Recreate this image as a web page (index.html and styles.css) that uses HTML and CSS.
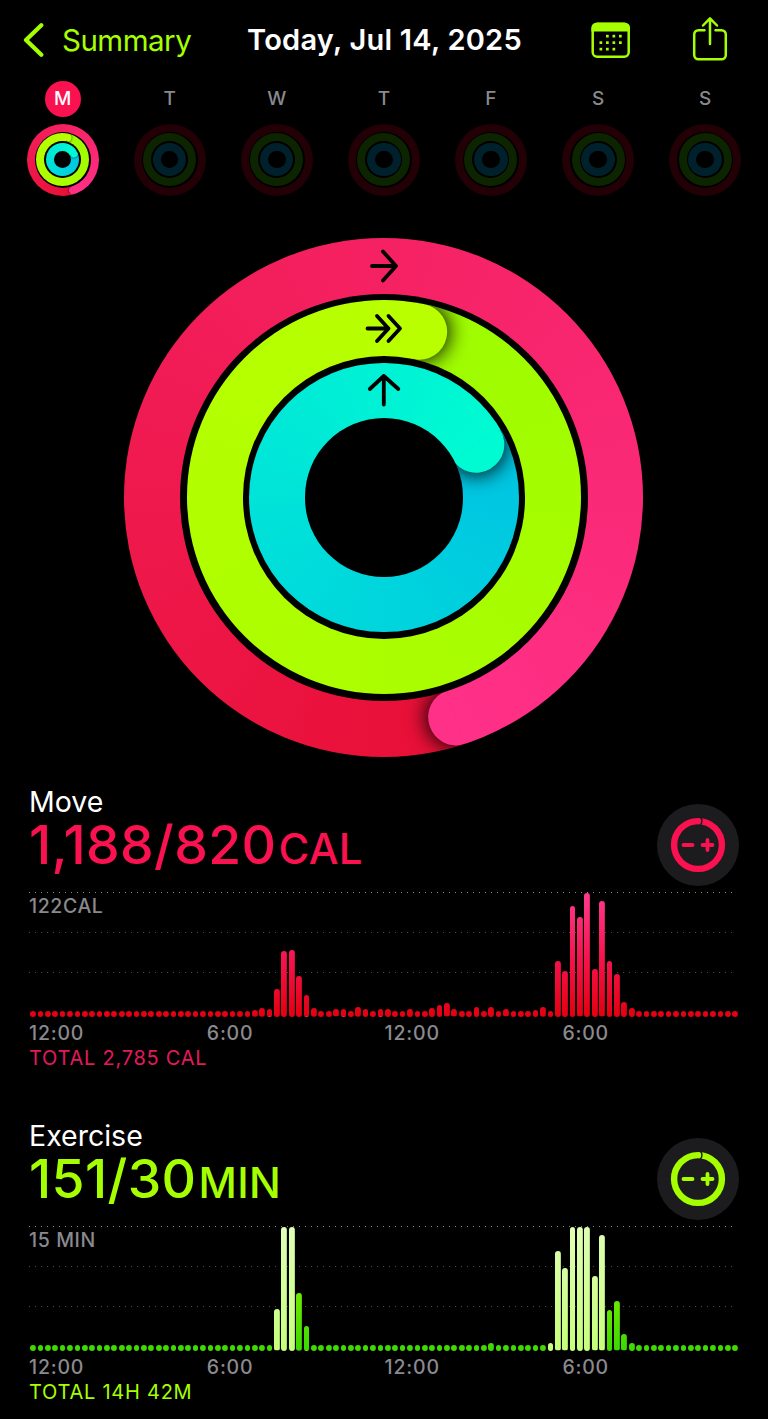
FILE: index.html
```
<!DOCTYPE html>
<html lang="en">
<head>
  <meta charset="UTF-8" />
  <meta name="viewport" content="width=device-width, initial-scale=1.0"/>
  <title>Activity - Summary</title>
  <link rel="stylesheet" href="styles.css">
</head>
<body>
  <header class="topbar">
    <a class="back">
      <svg width="22" height="36" viewBox="0 0 22 36"><path d="M19.300 3.200 4 18 19.300 32.800"/></svg>
      <span>Summary</span>
    </a>
    <h1>Today, Jul 14, 2025</h1>
    <div class="actions">
      <svg class="calendar" width="40" height="36" viewBox="0 0 40 36">
        <rect x="1.700" y="1.900" width="36" height="32.800" rx="4.500"/>
        <path class="solid" d="M.4 9.500V6a5.500 5.500 0 0 1 5.500-5.500H33.500A5.500 5.500 0 0 1 39 6v3.500z"/>
        <g class="solid">
          <rect x="15" y="12.800" width="2.700" height="2.700"/><rect x="21.500" y="12.800" width="2.700" height="2.700"/><rect x="28" y="12.800" width="2.700" height="2.700"/>
          <rect x="8.500" y="19.300" width="2.700" height="2.700"/><rect x="15" y="19.300" width="2.700" height="2.700"/><rect x="21.500" y="19.300" width="2.700" height="2.700"/><rect x="28" y="19.300" width="2.700" height="2.700"/>
          <rect x="8.500" y="25.800" width="2.700" height="2.700"/><rect x="15" y="25.800" width="2.700" height="2.700"/><rect x="21.500" y="25.800" width="2.700" height="2.700"/>
        </g>
      </svg>
      <svg class="share" width="36" height="46" viewBox="0 0 36 46">
        <path d="M12.500 14.200H6.500A4.300 4.300 0 0 0 2.200 18.500V39a4.300 4.300 0 0 0 4.300 4.300h23a4.300 4.300 0 0 0 4.300-4.300V18.500a4.300 4.300 0 0 0-4.300-4.300H23.500M18 28V2.500M11 9.500 18 2.300 25 9.500"/>
      </svg>
    </div>
  </header>

  <div class="week" id="week"></div>

  <div class="rings big">
    <div class="ring move"><div class="tip"></div>
      <div class="gap">
        <div class="ring exercise"><div class="tip"></div>
          <div class="gap">
            <div class="ring stand"><div class="tip"></div>
              <div class="gap hole"></div>
            </div>
          </div>
        </div>
      </div>
    </div>
    <svg class="arrows" viewBox="0 0 519 519">
      <path d="M248 28H272M259 13.500 272 28 259 42.500"/>
      <path d="M243.500 90.500H264.500M253 78 264.500 90.500 253 103M264.500 78 276 90.500 264.500 103"/>
      <path d="M259.800 166.500V138M245.800 151 259.800 138 274.300 151"/>
    </svg>
  </div>

  <section class="metric pink">
    <div class="metric-head">
      <div>
        <h2>Move</h2>
        <p class="value">1,188/820<small>CAL</small></p>
      </div>
      <button class="adjust" aria-label="Change move goal">
        <svg width="56" height="56" viewBox="0 0 56 56">
          <circle cx="28" cy="28" r="23.900"/>
          <path class="notch" d="M30.500 .2Q33.500 4 30.500 8"/>
          <path class="sign" d="M13.500 28H22.500M32.500 28H42.500M37.500 23V33"/>
        </svg>
      </button>
    </div>
    <div class="chart">
      <span class="scale">122CAL</span>
      <div class="bars" id="move-bars"></div>
    </div>
    <div class="hours"><span>12:00</span><span>6:00</span><span>12:00</span><span>6:00</span></div>
    <p class="total">TOTAL 2,785 CAL</p>
  </section>

  <section class="metric green">
    <div class="metric-head">
      <div>
        <h2>Exercise</h2>
        <p class="value">151/30<small>MIN</small></p>
      </div>
      <button class="adjust" aria-label="Change exercise goal">
        <svg width="56" height="56" viewBox="0 0 56 56">
          <circle cx="28" cy="28" r="23.900"/>
          <path class="notch" d="M30.500 .2Q33.500 4 30.500 8"/>
          <path class="sign" d="M13.500 28H22.500M32.500 28H42.500M37.500 23V33"/>
        </svg>
      </button>
    </div>
    <div class="chart">
      <span class="scale">15 MIN</span>
      <div class="bars" id="exercise-bars"></div>
    </div>
    <div class="hours"><span>12:00</span><span>6:00</span><span>12:00</span><span>6:00</span></div>
    <p class="total">TOTAL 14H 42M</p>
  </section>

  <script>
    const days = ["M", "T", "W", "T", "F", "S", "S"];
    const week = document.getElementById("week");

    days.forEach((day, i) => {
      week.innerHTML += `
        <div class="day ${i === 0 ? "today" : "empty"}">
          <span class="letter">${day}</span>
          <div class="rings mini">
            <div class="ring move"><div class="tip"></div><div class="gap">
              <div class="ring exercise"><div class="tip"></div><div class="gap">
                <div class="ring stand"><div class="tip"></div><div class="gap hole"></div></div>
              </div></div>
            </div></div>
          </div>
        </div>`;
    });

    // one bar per 15 minutes, slots that are not listed stay at the minimum
    const slots = 96;
    const minHeight = 6;

    const move = {
      30: 6.7, 31: 8.7, 32: 7.3, 33: 28, 34: 66, 35: 67, 36: 41, 37: 21.3, 38: 8.7,
      41: 7.3, 42: 7.3, 44: 9.7, 45: 8, 47: 7.3, 48: 8, 51: 8, 54: 9, 55: 12, 56: 13.3,
      57: 7.3, 60: 10, 62: 10, 64: 7.3, 68: 7, 69: 9.7, 71: 56, 72: 46, 73: 111,
      74: 99.3, 75: 124, 76: 48, 77: 115.3, 78: 56, 79: 43, 80: 15, 81: 9
    };

    const exercise = {
      33: 41.3, 34: 124, 35: 124, 36: 57.7, 37: 24.3, 62: 8, 70: 8, 71: 99.3, 72: 82.3,
      73: 124, 74: 124, 75: 124, 76: 74.3, 77: 115.3, 78: 41, 79: 49.3, 80: 16.3, 81: 8
    };

    const workout = [33, 34, 35, 70, 71, 72, 73, 74, 75, 76, 77];

    function drawBars(id, data, bright) {
      const box = document.getElementById(id);
      for (let i = 0; i < slots; i++) {
        const bar = document.createElement("i");
        bar.style.height = (data[i] || minHeight) + "px";
        if (bright.includes(i)) bar.classList.add("bright");
        box.appendChild(bar);
      }
    }

    drawBars("move-bars", move, []);
    drawBars("exercise-bars", exercise, workout);
  </script>
</body>
</html>
```
FILE: styles.css
```
* {
  box-sizing: border-box;
}

body {
  margin: 0;
  height: 1419px;
  overflow: hidden;
  background: #000;
  color: white;
  font-family: Inter, "Liberation Sans", sans-serif;
}

h1, h2, p {
  margin: 0;
}

svg {
  display: block;
  fill: none;
  stroke-linecap: round;
  stroke-linejoin: round;
}

/* header */
.topbar {
  height: 80px;
  padding: 0 40px 1px 22px;
  display: grid;
  grid-template-columns: 225px 1fr 137px;
  align-items: center;
}

.back {
  display: flex;
  align-items: center;
  gap: 18px;
  color: #a6ff00;
  font-size: 29.5px;
  letter-spacing: -0.5px;
}

.back svg {
  stroke: #a6ff00;
  stroke-width: 4.2;
}

.topbar h1 {
  font-size: 29px;
  font-weight: 600;
  letter-spacing: 0.25px;
  white-space: nowrap;
}

.actions {
  display: flex;
  justify-content: space-between;
  align-items: center;
}

.actions svg {
  stroke: #a6ff00;
  stroke-width: 2.5;
}

.actions .solid {
  fill: #a6ff00;
  stroke: none;
}

.share {
  margin-top: -1px;
}

/* week strip */
.week {
  display: grid;
  grid-template-columns: repeat(7, 107.1px);
  padding-left: 9px;
}

.day {
  display: flex;
  flex-direction: column;
  align-items: center;
  gap: 7px;
  padding-top: 0.6px;
}

.letter {
  width: 36px;
  height: 36px;
  border-radius: 50%;
  line-height: 36px;
  text-align: center;
  font-size: 19px;
  font-weight: 500;
  color: #8a8a8e;
}

.today .letter {
  background: #fa114f;
  color: white;
}

/* activity rings: discs stacked inside each other */
.rings {
  position: relative;
}

.ring, .gap {
  position: relative;
  border-radius: 50%;
  display: grid;
  place-content: center;
}

.ring {
  overflow: hidden;
  width: var(--size);
  height: var(--size);
  background: conic-gradient(from var(--end), var(--old), var(--new));
}

.gap {
  width: var(--inner);
  height: var(--inner);
  background: #000;
}

.move {
  --end: 161.8deg;
  --old: #e80f35;
  --new: #ff3088;
}

.exercise {
  --end: 12deg;
  --old: #9efc00;
  --new: #b9ff00;
}

.stand {
  --end: 60deg;
  --old: #00c2e2;
  --new: #00fbd2;
}

/* rounded end of the ring, only its leading half is shown */
.tip {
  position: absolute;
  inset: 0;
  transform: rotate(var(--end));
  clip-path: inset(0 0 0 49.95%);
}

.tip::before {
  content: "";
  position: absolute;
  top: 0;
  left: calc(50% - var(--band) / 2);
  width: var(--band);
  height: var(--band);
  border-radius: 50%;
  background: var(--new);
  box-shadow: 0 0 var(--blur) var(--spread) rgba(0, 0, 0, 0.95);
}

.big {
  width: 519px;
  margin: 42.4px 0 0 124.4px;
  --band: 55.7px;
  --blur: 20px;
  --spread: 2px;
}

.big .move { --size: 519px; --inner: 407.5px; }
.big .exercise { --size: 394px; --inner: 282.6px; }
.big .stand { --size: 269.4px; --inner: 158.6px; }

.mini {
  --band: 8px;
  --blur: 2px;
  --spread: 0px;
}

.mini .move { --size: 72px; --inner: 56px; }
.mini .exercise { --size: 53px; --inner: 37px; }
.mini .stand { --size: 33.4px; --inner: 17.6px; }

.empty .tip {
  display: none;
}

.empty .move { background: #230006; }
.empty .exercise { background: #0c2400; }
.empty .stand { background: #00202c; }

.arrows {
  position: absolute;
  inset: 0;
  stroke: #000;
  stroke-width: 3.8;
}

/* metrics */
.metric {
  height: 334px;
  padding-left: 29px;
  padding-right: 29px;
}

.big + .metric {
  margin-top: 28px;
}

.pink {
  --accent: #fa114f;
  --total: #e3195d;
  --bar: linear-gradient(#ff3a90, #f5124a 55%, #e3000f);
}

.green {
  --accent: #a6ff00;
  --total: #a6ff00;
  --bar: linear-gradient(#a6ff00, #6fe900 55%, #3bd900);
}

.metric-head {
  height: 107px;
  display: flex;
  justify-content: space-between;
}

h2 {
  font-size: 28.5px;
  font-weight: 400;
  line-height: 34px;
}

.value {
  font-size: 53.5px;
  font-weight: 500;
  line-height: 52px;
  letter-spacing: 0.35px;
  color: var(--accent);
}

.value small {
  margin-left: 2px;
  font-size: 42px;
  font-weight: 550;
  letter-spacing: 0.4px;
}

.adjust {
  width: 82px;
  height: 82px;
  margin-top: 19px;
  padding: 0;
  border: 0;
  border-radius: 50%;
  background: #1c1c1e;
  display: grid;
  place-content: center;
}

.adjust svg {
  stroke: var(--accent);
  stroke-width: 6.4;
}

.adjust .notch {
  stroke: #1c1c1e;
  stroke-width: 1.4;
}

.adjust .sign {
  stroke-width: 3.8;
}

.chart {
  position: relative;
  height: 125px;
}

.chart::before {
  content: "";
  position: absolute;
  inset: 0 2px 0 0;
  background:
    linear-gradient(90deg, #888 1px, transparent 1px) 0 0 / 6px 1px repeat-x,
    linear-gradient(90deg, #4a4a4a 1px, transparent 1px) 0 40px / 6px 1px repeat-x,
    linear-gradient(90deg, #4a4a4a 1px, transparent 1px) 0 80px / 6px 1px repeat-x;
}

.scale {
  position: absolute;
  top: 2px;
  left: 0;
  line-height: 24px;
  font-size: 19.5px;
  font-weight: 500;
  letter-spacing: 0.6px;
  color: #8a8a8e;
}

.bars {
  position: relative;
  height: 124.6px;
  padding: 0 1px 0 1.2px;
  display: flex;
  align-items: flex-end;
  justify-content: space-between;
}

.bars i {
  width: 5.7px;
  border-radius: 3px;
  background: var(--bar) bottom / 100% 124px;
}

.bars .bright {
  background-image: linear-gradient(#e0ffb5, #c6ff7a);
}

.hours {
  display: grid;
  grid-template-columns: repeat(4, 177.8px);
  margin-top: 4px;
  line-height: 24px;
  font-size: 19.5px;
  font-weight: 500;
  letter-spacing: 0.8px;
  color: #8a8a8e;
}

.total {
  line-height: 26px;
  font-size: 20px;
  letter-spacing: 0.75px;
  color: var(--total);
}
```
